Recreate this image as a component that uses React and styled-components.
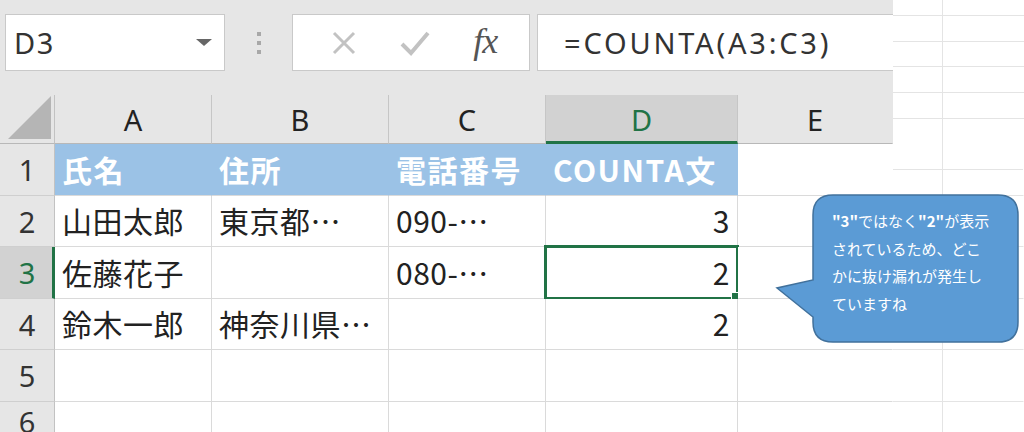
import React from 'react';
import styled, { createGlobalStyle } from 'styled-components';

const GlobalStyle = createGlobalStyle`
  html, body {
    margin: 0;
    padding: 0;
    background: #fff;
  }
  body {
    font-family: "Noto Sans CJK JP", "Noto Sans", sans-serif;
    overflow: hidden;
  }
`;

const Page = styled.div`
  position: relative;
  width: 1024px;
  height: 432px;
  overflow: hidden;
  background: #fff;
`;

const Top = styled.div`
  display: flex;
`;

const Ribbon = styled.div`
  width: 893px;
  background: #e6e6e6;
`;

const Strip = styled.div`
  flex: 1;
  height: 144px;
  background:
    linear-gradient(to right, transparent 49px, #e4e4e4 49px, #e4e4e4 50px, transparent 50px),
    repeating-linear-gradient(to bottom, transparent 0, transparent 24.8px, #e4e4e4 24.8px, #e4e4e4 25.8px);
  background-position: 0 0, 0 -10px;
`;

/* formula bar */
const FormulaBar = styled.div`
  display: flex;
  align-items: flex-start;
  height: 95px;
  padding-top: 14px;
  box-sizing: border-box;
`;

const Box = styled.div`
  height: 57px;
  box-sizing: border-box;
  background: #fff;
  border: 1px solid #c9c9c9;
  display: flex;
  align-items: center;
`;

const NameBox = styled(Box)`
  width: 220px;
  margin-left: 5px;
  padding-left: 8px;
  justify-content: space-between;
  font-family: "Noto Sans", sans-serif;
  font-size: 29px;
  letter-spacing: 1.5px;
  color: #333;
`;

const Caret = styled.span`
  width: 0;
  height: 0;
  margin-right: 12px;
  border-left: 8px solid transparent;
  border-right: 8px solid transparent;
  border-top: 7px solid #666;
`;

const Grip = styled.div`
  width: 67px;
  height: 57px;
  display: flex;
  flex-direction: column;
  align-items: center;
  justify-content: center;
  gap: 5px;

  span {
    width: 4px;
    height: 4px;
    background: #a8a8a8;
  }
`;

const FnButtons = styled(Box)`
  width: 238px;
  justify-content: space-around;
  padding: 0 10px 0 16px;
`;

const Fx = styled.span`
  font-family: "Liberation Serif", serif;
  font-style: italic;
  font-size: 36px;
  line-height: 1;
  color: #555;
  letter-spacing: -1px;
  margin-top: -4px;
`;

const FormulaInput = styled(Box)`
  flex: 1;
  margin-left: 7px;
  border-right: none;
  padding-left: 26px;
  font-family: "Noto Sans", sans-serif;
  font-size: 29px;
  letter-spacing: 2.8px;
  color: #333;
`;

/* column headers */
const HeaderRow = styled.div`
  display: flex;
  height: 49px;
`;

const Corner = styled.div`
  width: 55px;
  box-sizing: border-box;
  border-right: 1px solid #c2c2c2;
  border-bottom: 1px solid #b8b8b8;
  display: flex;
  align-items: flex-end;
  justify-content: flex-end;
  padding: 0 3px 4px 0;
`;

const ColHead = styled.div`
  width: ${p => p.$w}px;
  box-sizing: border-box;
  display: flex;
  align-items: center;
  justify-content: center;
  font-family: "Noto Sans", sans-serif;
  font-size: 29px;
  color: ${p => (p.$active ? '#217346' : '#222')};
  background: ${p => (p.$active ? '#d2d2d2' : 'transparent')};
  border-right: 1px solid ${p => (p.$last ? 'transparent' : '#c6c6c6')};
  border-bottom: ${p => (p.$active ? '3px solid #217346' : '1px solid #b8b8b8')};
  padding-top: ${p => (p.$active ? '2px' : '0')};
`;

/* sheet */
const Row = styled.div`
  display: flex;
  height: ${p => p.$h}px;
`;

const RowHead = styled.div`
  width: 55px;
  box-sizing: border-box;
  background: ${p => (p.$active ? '#d2d2d2' : '#e6e6e6')};
  border-right: ${p => (p.$active ? '3px solid #217346' : '1px solid #c2c2c2')};
  border-bottom: 1px solid #cfcfcf;
  display: flex;
  align-items: center;
  justify-content: center;
  padding-left: ${p => (p.$active ? '2px' : '0')};
  font-family: "Noto Sans", sans-serif;
  font-size: 29px;
  color: ${p => (p.$active ? '#217346' : '#333')};
`;

const Cell = styled.div`
  position: relative;
  width: ${p => p.$w}px;
  box-sizing: border-box;
  display: flex;
  align-items: center;
  justify-content: ${p => (p.$num ? 'flex-end' : 'flex-start')};
  padding: 0 7px 2px 7px;
  font-size: 30px;
  letter-spacing: ${p => (p.$head ? '1.5px' : '0.5px')};
  white-space: nowrap;
  color: ${p => (p.$head ? '#fff' : '#222')};
  font-weight: ${p => (p.$head ? 700 : 400)};
  background: ${p => (p.$head ? '#9bc2e6' : '#fff')};
  border-right: 1px solid ${p => (p.$head ? '#9bc2e6' : p.$open ? '#fff' : '#dadada')};
  border-bottom: 1px solid #dadada;
`;

const StripCell = styled(Cell)`
  background: ${p => (p.$lined ? 'linear-gradient(to bottom, #fff 25px, #e4e4e4 25px, #e4e4e4 26px, #fff 26px)' : '#fff')};
  border-right: 1px solid ${p => (p.$open ? '#fff' : '#e4e4e4')};
  border-bottom: 1px solid #e4e4e4;
`;

const Selection = styled.div`
  position: absolute;
  left: -2px;
  top: -2px;
  right: -2px;
  bottom: -2px;
  border: 3px solid #217346;
  pointer-events: none;
`;

const Handle = styled.div`
  position: absolute;
  right: -5px;
  bottom: -5px;
  width: 8px;
  height: 8px;
  background: #217346;
  border: 1px solid #fff;
`;

/* callout */
const Callout = styled.div`
  position: absolute;
  left: 775px;
  top: 194px;
  width: 246px;
  height: 150px;
`;

const CalloutText = styled.div`
  position: absolute;
  left: 57px;
  top: 13px;
  width: 162px;
  font-size: 15px;
  line-height: 27.5px;
  color: #fff;

  b {
    display: inline-block;
    font-weight: 700;
    line-height: 1;
  }
`;

const widths = [157, 177, 157, 192, 155];

const rows = [
  { h: 52, head: true, cells: ['氏名', '住所', '電話番号', 'COUNTA文', ''] },
  { h: 51, cells: ['山田太郎', '東京都…', '090-…', '3', ''] },
  { h: 52, cells: ['佐藤花子', '', '080-…', '2', ''], active: true },
  { h: 51, cells: ['鈴木一郎', '神奈川県…', '', '2', ''] },
  { h: 52, cells: ['', '', '', '', ''] },
  { h: 40, cells: ['', '', '', '', ''] },
];

const App = () => (
  <Page>
    <GlobalStyle />
    <Top>
      <Ribbon>
        <FormulaBar>
          <NameBox>
            D3
            <Caret />
          </NameBox>
          <Grip>
            <span />
            <span />
            <span />
          </Grip>
          <FnButtons>
            <svg width="26" height="24" viewBox="0 0 26 24">
              <path d="M3 2 L23 22 M23 2 L3 22" stroke="#c2c2c2" strokeWidth="3" fill="none" />
            </svg>
            <svg width="30" height="26" viewBox="0 0 30 26">
              <path d="M2 14 L11 23 L28 3" stroke="#c2c2c2" strokeWidth="4" fill="none" />
            </svg>
            <Fx>fx</Fx>
          </FnButtons>
          <FormulaInput>=COUNTA(A3:C3)</FormulaInput>
        </FormulaBar>
        <HeaderRow>
          <Corner>
            <svg width="43" height="43" viewBox="0 0 43 43">
              <path d="M0 43 L43 0 L43 43 Z" fill="#b5b5b5" />
            </svg>
          </Corner>
          {['A', 'B', 'C', 'D', 'E'].map((c, i) => (
            <ColHead key={c} $w={widths[i]} $active={c === 'D'} $last={c === 'E'}>
              {c}
            </ColHead>
          ))}
        </HeaderRow>
      </Ribbon>
      <Strip />
    </Top>

    {rows.map((r, ri) => (
      <Row key={ri} $h={r.h}>
        <RowHead $active={r.active}>{ri + 1}</RowHead>
        {r.cells.map((t, ci) => (
          <Cell
            key={ci}
            $w={widths[ci]}
            $head={r.head && ci < 4}
            $num={ci === 3 && !r.head}
            $open={ci === 4}
          >
            {t}
            {r.active && ci === 3 && (
              <Selection>
                <Handle />
              </Selection>
            )}
          </Cell>
        ))}
        <StripCell $w={50} $lined={r.head} />
        <StripCell $w={81} $lined={r.head} $open />
      </Row>
    ))}

    <Callout>
      <svg width="246" height="150" viewBox="0 0 246 150">
        <path
          d="M58 1 H223 Q243 1 243 21 V128 Q243 148 223 148 H58 Q38 148 38 128 V123 L2 94 L38 86 V21 Q38 1 58 1 Z"
          fill="#5b9bd5"
          stroke="#41719c"
          strokeWidth="1.5"
        />
      </svg>
      <CalloutText>
        <b>"3"</b>ではなく<b>"2"</b>が表示されているため、どこかに抜け漏れが発生していますね
      </CalloutText>
    </Callout>
  </Page>
);

export default App;
